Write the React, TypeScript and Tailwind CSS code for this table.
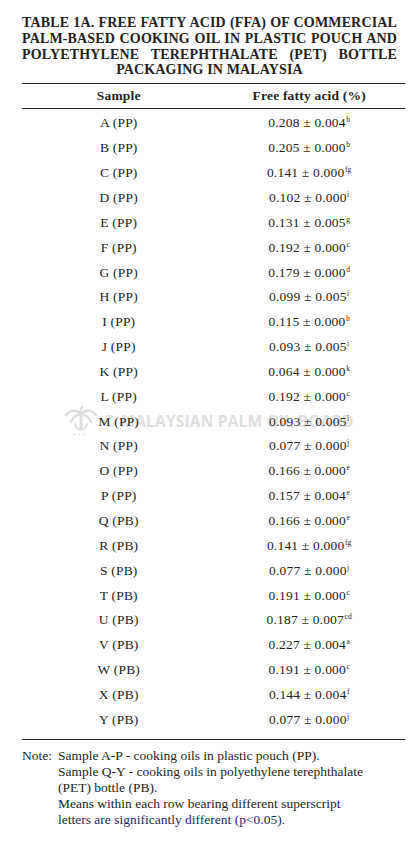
import React from 'react';

const rows: [string, string, string][] = [
    ['A (PP)', '0.208 ± 0.004', 'b'],
    ['B (PP)', '0.205 ± 0.000', 'b'],
    ['C (PP)', '0.141 ± 0.000', 'fg'],
    ['D (PP)', '0.102 ± 0.000', 'i'],
    ['E (PP)', '0.131 ± 0.005', 'g'],
    ['F (PP)', '0.192 ± 0.000', 'c'],
    ['G (PP)', '0.179 ± 0.000', 'd'],
    ['H (PP)', '0.099 ± 0.005', 'i'],
    ['I (PP)', '0.115 ± 0.000', 'h'],
    ['J (PP)', '0.093 ± 0.005', 'i'],
    ['K (PP)', '0.064 ± 0.000', 'k'],
    ['L (PP)', '0.192 ± 0.000', 'c'],
    ['M (PP)', '0.093 ± 0.005', 'i'],
    ['N (PP)', '0.077 ± 0.000', 'j'],
    ['O (PP)', '0.166 ± 0.000', 'e'],
    ['P (PP)', '0.157 ± 0.004', 'e'],
    ['Q (PB)', '0.166 ± 0.000', 'e'],
    ['R (PB)', '0.141 ± 0.000', 'fg'],
    ['S (PB)', '0.077 ± 0.000', 'j'],
    ['T (PB)', '0.191 ± 0.000', 'c'],
    ['U (PB)', '0.187 ± 0.007', 'cd'],
    ['V (PB)', '0.227 ± 0.004', 'a'],
    ['W (PB)', '0.191 ± 0.000', 'c'],
    ['X (PB)', '0.144 ± 0.004', 'f'],
    ['Y (PB)', '0.077 ± 0.000', 'j'],
];

const PalmLogo = () => (
    <svg width="34" height="30" viewBox="0 0 34 30" fill="none" stroke="#dedede" strokeWidth="2.4" strokeLinecap="round">
        <path d="M17 8 C12 3 6 4 2 9" />
        <path d="M17 8 C22 3 28 4 32 9" />
        <path d="M17 9 C13 8 9 11 7 16" />
        <path d="M17 9 C21 8 25 11 27 16" />
        <path d="M17 8 C16 4 17 2 18 1" />
        <path d="M17 10 L17 23" strokeWidth="2.8" />
        <path d="M11 18 C11 25 23 25 23 18" strokeWidth="1.8" />
        <circle cx="10" cy="28.5" r="0.6" fill="#dedede" strokeWidth="0.8" />
        <circle cx="15" cy="28.5" r="0.6" fill="#dedede" strokeWidth="0.8" />
        <circle cx="20" cy="28.5" r="0.6" fill="#dedede" strokeWidth="0.8" />
    </svg>
);

const App = () => {
    return (
        <div className="bg-white w-[419px] min-h-[848px] px-[22px] pt-[15px] text-[#231f20]" style={{ fontFamily: '"Liberation Serif", "DejaVu Serif", serif' }}>
            <h1 className="font-bold text-[14px] leading-[15.8px] text-justify [text-align-last:center] tracking-[0.15px]">
                TABLE 1A. FREE FATTY ACID (FFA) OF COMMERCIAL PALM-BASED COOKING OIL IN PLASTIC POUCH AND POLYETHYLENE TEREPHTHALATE (PET) BOTTLE PACKAGING IN MALAYSIA
            </h1>

            <div className="relative mt-[5px] w-[383px]">
                {/* watermark */}
                <div className="absolute left-[42px] top-[323px] flex items-center gap-[5px] pointer-events-none select-none">
                    <PalmLogo />
                    <span className="font-bold text-[15.5px] tracking-[0.2px] text-[#dfdfdf]" style={{ fontFamily: '"Open Sans", "Liberation Sans", sans-serif' }}>
                        © MALAYSIAN PALM OIL BOARD
                    </span>
                </div>

                <div className="relative border-t-[1.5px] border-b-[1.5px] border-[#231f20] text-[13.5px] tracking-[0.2px]">
                    <div className="grid grid-cols-2 h-[25px] items-center font-bold border-b-[1.5px] border-[#231f20] text-[13.5px]">
                        <div className="text-center pl-[2px]">Sample</div>
                        <div className="text-center">Free fatty acid (%)</div>
                    </div>
                    <div className="pt-[2px] pb-[7px]">
                        {rows.map(([s, v, sup]) => (
                            <div key={s} className="grid grid-cols-2 h-[24.85px] items-center">
                                <div className="text-center pl-[2px]">{s}</div>
                                <div className="text-center">
                                    {v}
                                    <span className="text-[7.5px] leading-none relative -top-[5px] ml-[0.5px]">{sup}</span>
                                </div>
                            </div>
                        ))}
                    </div>
                </div>
            </div>

            <div className="mt-[8px] text-[13.5px] leading-[16px] flex">
                <span className="shrink-0 w-[36px]">Note:</span>
                <div>
                    <p>Sample A-P - cooking oils in plastic pouch (PP).</p>
                    <p>Sample Q-Y - cooking oils in polyethylene terephthalate</p>
                    <p>(PET) bottle (PB).</p>
                    <p>Means within each row bearing different superscript</p>
                    <p className="text-[#1c2a5e]">letters are significantly different (p&lt;0.05).</p>
                </div>
            </div>
        </div>
    );
};

export default App;
